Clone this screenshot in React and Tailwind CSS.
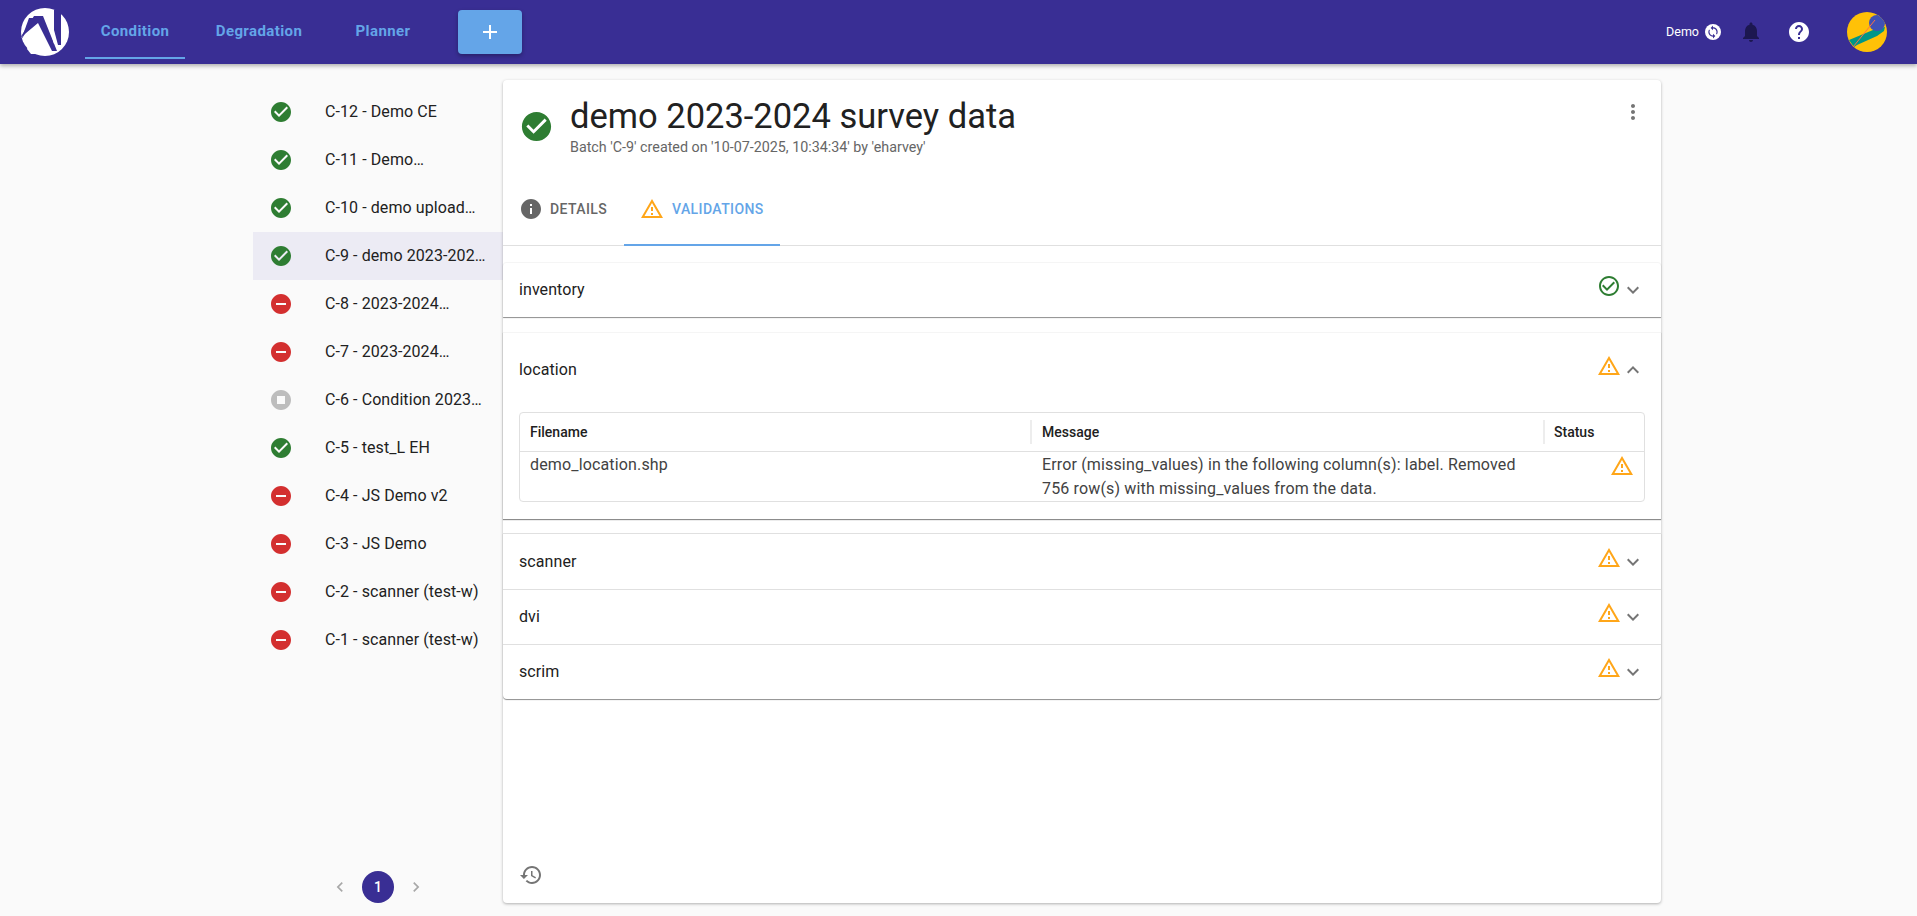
import React from "react";

const P = {
  check: "M12 2C6.48 2 2 6.48 2 12s4.48 10 10 10 10-4.48 10-10S17.52 2 12 2zm-2 15l-5-5 1.41-1.41L10 14.17l7.59-7.59L19 8l-9 9z",
  remove: "M12 2C6.48 2 2 6.48 2 12s4.48 10 10 10 10-4.48 10-10S17.52 2 12 2zm5 11H7v-2h10v2z",
  stop: "M12 2C6.48 2 2 6.48 2 12s4.48 10 10 10 10-4.48 10-10S17.52 2 12 2zm4 14H8V8h8v8z",
  info: "M12 2C6.48 2 2 6.48 2 12s4.48 10 10 10 10-4.48 10-10S17.52 2 12 2zm1 15h-2v-6h2v6zm0-8h-2V7h2v2z",
  warn: "M12 5.99L19.53 19H4.47L12 5.99M12 2L1 21h22L12 2zm1 14h-2v2h2v-2zm0-6h-2v4h2v-4z",
  okOutline: "M16.59 7.58L10 14.17l-3.59-3.58L5 12l5 5 8-8zM12 2C6.48 2 2 6.48 2 12s4.48 10 10 10 10-4.48 10-10S17.52 2 12 2zm0 18c-4.42 0-8-3.58-8-8s3.58-8 8-8 8 3.58 8 8-3.58 8-8 8z",
  more: "M16.59 8.59L12 13.17 7.41 8.59 6 10l6 6 6-6z",
  less: "M12 8l-6 6 1.41 1.41L12 10.83l4.59 4.58L18 14z",
  vert: "M12 8c1.1 0 2-.9 2-2s-.9-2-2-2-2 .9-2 2 .9 2 2 2zm0 2c-1.1 0-2 .9-2 2s.9 2 2 2 2-.9 2-2-.9-2-2-2zm0 6c-1.1 0-2 .9-2 2s.9 2 2 2 2-.9 2-2-.9-2-2-2z",
  history: "M13 3c-4.97 0-9 4.03-9 9H1l3.89 3.89.07.14L9 12H6c0-3.87 3.13-7 7-7s7 3.13 7 7-3.13 7-7 7c-1.93 0-3.68-.79-4.94-2.06l-1.42 1.42C8.27 19.99 10.51 21 13 21c4.97 0 9-4.03 9-9s-4.03-9-9-9zm-1 5v5l4.28 2.54.72-1.21-3.5-2.08V8H12z",
  bell: "M12 22c1.1 0 2-.9 2-2h-4c0 1.1.89 2 2 2zm6-6v-5c0-3.07-1.64-5.64-4.5-6.32V4c0-.83-.67-1.5-1.5-1.5s-1.5.67-1.5 1.5v.68C7.63 5.36 6 7.92 6 11v5l-2 2v1h16v-1l-2-2z",
  help: "M12 2C6.48 2 2 6.48 2 12s4.48 10 10 10 10-4.48 10-10S17.52 2 12 2zm1 17h-2v-2h2v2zm2.07-7.75l-.9.92C13.45 12.9 13 13.5 13 15h-2v-.5c0-1.1.45-2.1 1.17-2.83l1.24-1.26c.37-.36.59-.86.59-1.41 0-1.1-.9-2-2-2s-2 .9-2 2H8c0-2.21 1.79-4 4-4s4 1.79 4 4c0 .88-.36 1.68-.93 2.25z",
  add: "M19 13h-6v6h-2v-6H5v-2h6V5h2v6h6v2z",
  sync: "M12 4V1L8 5l4 4V6c3.31 0 6 2.69 6 6 0 1.01-.25 1.97-.7 2.8l1.46 1.46C19.54 15.03 20 13.57 20 12c0-4.42-3.58-8-8-8zm0 14c-3.31 0-6-2.69-6-6 0-1.01.25-1.97.7-2.8L5.24 7.74C4.46 8.97 4 10.43 4 12c0 4.42 3.58 8 8 8v3l4-4-4-4v3z",
  left: "M15.41 7.41L14 6l-6 6 6 6 1.41-1.41L10.83 12z",
  right: "M10 6L8.59 7.41 13.17 12l-4.58 4.59L10 18l6-6z",
};

function Icon({ d, className = "" }) {
  return (
    <svg viewBox="0 0 24 24" className={"fill-current shrink-0 " + className}>
      <path d={d} />
    </svg>
  );
}

const batches = [
  ["C-12 - Demo CE", "ok"],
  ["C-11 - Demo…", "ok"],
  ["C-10 - demo upload…", "ok"],
  ["C-9 - demo 2023-202…", "ok", true],
  ["C-8 - 2023-2024…", "err"],
  ["C-7 - 2023-2024…", "err"],
  ["C-6 - Condition 2023…", "stop"],
  ["C-5 - test_L EH", "ok"],
  ["C-4 - JS Demo v2", "err"],
  ["C-3 - JS Demo", "err"],
  ["C-2 - scanner (test-w)", "err"],
  ["C-1 - scanner (test-w)", "err"],
];

function StatusIcon({ kind }) {
  if (kind === "ok") return <Icon d={P.check} className="w-6 h-6 text-[#2e7d32]" />;
  if (kind === "err") return <Icon d={P.remove} className="w-6 h-6 text-[#d32f2f]" />;
  return <Icon d={P.stop} className="w-6 h-6 text-[#bdbdbd]" />;
}

function Logo() {
  return (
    <svg viewBox="0 0 48 48" className="w-12 h-12 shrink-0">
      <circle cx="24" cy="24" r="24" fill="#fff" />
      <path d="M-1 30 L13 8 L22 8 L36 43 L31 43 L17 15 Z" fill="#392e94" />
      <path d="M0 32 L14 10 L8 10 Z" fill="#392e94" />
      <path d="M6 41 L15 22 L26 46 L10 46 Z" fill="#fff" />
      <path d="M24 3 L29 3 L38 36 L33 36 Z" fill="#fff" />
      <path d="M33 2 L40 2 L40 37 L37 37 L33 22 Z" fill="#392e94" />
    </svg>
  );
}

function Avatar() {
  return (
    <svg viewBox="0 0 40 40" className="w-10 h-10 shrink-0">
      <defs>
        <clipPath id="av"><circle cx="20" cy="20" r="20" /></clipPath>
      </defs>
      <g clipPath="url(#av)">
        <rect width="40" height="40" fill="#ffc107" />
        <path d="M2 28 L26 18 L38 15 L37 19 L30 24 L10 33 L7 35 Z" fill="#009688" />
        <circle cx="30" cy="11" r="8" fill="#3f51b5" />
        <path d="M6 35 L28 8" stroke="#ff7043" strokeWidth="1" fill="none" />
      </g>
    </svg>
  );
}

function NavTab({ children, active, w }) {
  return (
    <div className={"h-[56px] mt-[-2px] pt-[2px] flex items-center justify-center text-[15px] font-bold tracking-[0.4px] text-[#64a5e8] border-b-2 " + w + (active ? " border-[#64a5e8]" : " border-transparent")}>
      {children}
    </div>
  );
}

function Row({ label, kind, className = "h-[55px]" }) {
  return (
    <div className={"flex items-center pl-[16px] pr-[16px] text-[#212121] text-base tracking-[0.08px] " + className}>
      <span>{label}</span>
      <span className="ml-auto flex items-start">
        <Icon d={kind === "ok" ? P.okOutline : P.warn} className={"w-6 h-6 -mt-[4px] " + (kind === "ok" ? "text-[#2e7d32]" : "text-[#ffa619]")} />
        <Icon d={P.more} className="w-6 h-6 text-[#757575]" />
      </span>
    </div>
  );
}

export default function App() {
  return (
    <div className="h-[916px] overflow-hidden flex flex-col bg-[#fafafa] font-[Roboto,sans-serif]">
      <header className="h-16 shrink-0 bg-[#392e94] shadow-[0_2px_4px_rgba(0,0,0,0.3)] flex items-center pl-[21px] pr-[30px] relative z-10">
        <Logo />
        <div className="flex ml-[16px]">
          <NavTab active w="w-[100px]">Condition</NavTab>
          <NavTab w="w-[136px] ml-[6px]">Degradation</NavTab>
          <NavTab w="w-[120px] ml-[-4px]">Planner</NavTab>
        </div>
        <button className="ml-[15px] w-16 h-[44px] rounded bg-[#64a5e8] text-white flex items-center justify-center shadow-[0_2px_4px_rgba(0,0,0,0.3)]">
          <Icon d={P.add} className="w-6 h-6" />
        </button>
        <div className="ml-auto flex items-center">
          <span className="text-[12.5px] text-white">Demo</span>
          <span className="ml-[6px] w-4 h-4 rounded-full bg-white flex items-center justify-center text-[#392e94]">
            <Icon d={P.sync} className="w-[14px] h-[14px]" />
          </span>
          <Icon d={P.bell} className="ml-[18px] w-6 h-6 text-[#1c1750]" />
          <Icon d={P.help} className="ml-[24px] w-6 h-6 text-white" />
          <span className="ml-[36px]"><Avatar /></span>
        </div>
      </header>

      <div className="flex-1 flex pl-[253px] min-h-0">
        <aside className="w-[250px] pt-[24px] pb-[13px] flex flex-col">
          <ul>
            {batches.map(([label, kind, sel]) => (
              <li key={label} className={"h-12 flex items-center pl-[16px] text-[#212121] text-base tracking-[0.08px] " + (sel ? "bg-[#ecebf4]" : "")}>
                <StatusIcon kind={kind} />
                <span className="ml-[32px] whitespace-nowrap">{label}</span>
              </li>
            ))}
          </ul>
          <div className="mt-auto flex items-center justify-center gap-[3px] text-[#a8a8a8]">
            <span className="w-8 h-8 flex items-center justify-center"><Icon d={P.left} className="w-5 h-5" /></span>
            <span className="w-8 h-8 mx-[3px] rounded-full bg-[#392e94] text-white text-sm font-medium flex items-center justify-center">1</span>
            <span className="w-8 h-8 flex items-center justify-center"><Icon d={P.right} className="w-5 h-5" /></span>
          </div>
        </aside>

        <main className="w-[1158px] mt-[16px] mb-[13px] bg-white rounded shadow-[0_1px_3px_rgba(0,0,0,0.3)] flex flex-col">
          <div className="h-[92px] shrink-0 flex relative pl-[16px] pr-[16px]">
            <Icon d={P.check} className="w-[35px] h-[35px] mt-[29px] text-[#2e7d32]" />
            <div className="ml-[16px] pt-[15px]">
              <div className="text-[34.5px] leading-[42px] text-[#212121]">demo 2023-2024 survey data</div>
              <div className="text-[14.3px] leading-[20px] text-[#666666]">Batch 'C-9' created on '10-07-2025, 10:34:34' by 'eharvey'</div>
            </div>
            <Icon d={P.vert} className="ml-auto mt-[20px] w-6 h-6 text-[#757575]" />
          </div>

          <div className="h-[74px] shrink-0 flex border-b border-[#e0e0e0]">
            <div className="w-[121px] flex items-center pl-[16px] pt-[1px] text-[#666666] text-sm font-medium tracking-[0.4px]">
              <Icon d={P.info} className="w-6 h-6" />
              <span className="ml-[7px]">DETAILS</span>
            </div>
            <div className="w-[156px] flex items-center pl-[16px] pt-[1px] text-[#64a5e8] text-sm font-medium tracking-[0.4px] border-b-2 border-[#64a5e8] h-[74px]">
              <Icon d={P.warn} className="w-6 h-6 text-[#ffa619]" />
              <span className="ml-[8px]">VALIDATIONS</span>
            </div>
          </div>

          <div className="pt-[16px]">
            <div className="rounded-t border-t border-[#f5f5f5] shadow-[0_1px_1px_rgba(0,0,0,0.45)]">
              <Row label="inventory" kind="ok" className="h-[54px]" />
            </div>

            <div className="mt-[15px] shadow-[0_1px_1px_rgba(0,0,0,0.45)] h-[187px] border-t border-[#f5f5f5]">
              <div className="flex items-center h-[73px] pl-[16px] pr-[16px] text-[#212121] text-base tracking-[0.08px]">
                <span>location</span>
                <span className="ml-auto flex items-start">
                  <Icon d={P.warn} className="w-6 h-6 -mt-[4px] text-[#ffa619]" />
                  <Icon d={P.less} className="w-6 h-6 text-[#757575]" />
                </span>
              </div>
              <div className="mx-[16px] mt-[6px] border border-[#e0e0e0] rounded h-[90px] text-sm">
                <div className="grid grid-cols-[510px_513px_1fr] h-[39px] border-b border-[#e0e0e0] font-medium text-[#212121]">
                  <div className="flex items-center pl-[10px]">Filename</div>
                  <div className="flex items-center my-[7px] pl-[10px] border-l-2 border-[#ededed]">Message</div>
                  <div className="flex items-center my-[7px] pl-[9px] border-l-2 border-[#ededed]">Status</div>
                </div>
                <div className="grid grid-cols-[510px_513px_1fr] h-[49px] text-[#424242] text-base tracking-[0.15px]">
                  <div className="pl-[10px] pt-[1px] leading-[24px]">demo_location.shp</div>
                  <div className="pl-[12px] pt-[1px] leading-[24px]">Error (missing_values) in the following column(s): label. Removed 756 row(s) with missing_values from the data.</div>
                  <div className="flex justify-end pr-[10px] pt-[2px]">
                    <Icon d={P.warn} className="w-6 h-6 text-[#ffa619]" />
                  </div>
                </div>
              </div>
            </div>

            <div className="mt-[14px] rounded-b shadow-[0_1px_1px_rgba(0,0,0,0.45)] border-t border-[#e0e0e0]">
              <Row label="scanner" kind="warn" />
              <Row label="dvi" kind="warn" className="h-[55px] border-t border-[#e0e0e0]" />
              <Row label="scrim" kind="warn" className="h-[55px] border-t border-[#e0e0e0]" />
            </div>
          </div>

          <div className="mt-auto pl-[16px] pb-[16px] text-[#757575]">
            <Icon d={P.history} className="w-6 h-6" />
          </div>
        </main>
      </div>
    </div>
  );
}
